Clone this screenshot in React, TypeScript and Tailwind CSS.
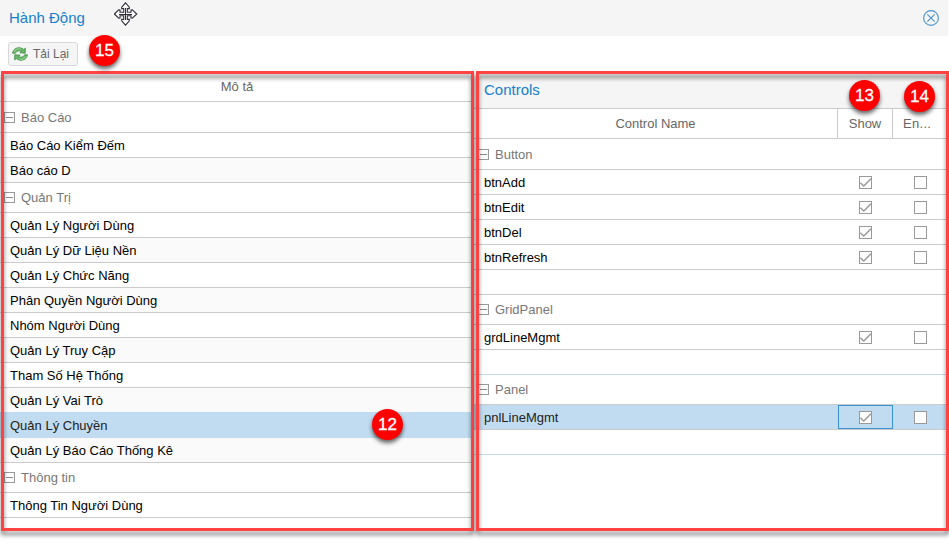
import React from "react";

type Row = { label: string; selected?: boolean };
type Group = { name: string; rows: Row[] };

const functionGroups: Group[] = [
  { name: "Báo Cáo", rows: [{ label: "Báo Cáo Kiểm Đếm" }, { label: "Báo cáo D" }] },
  {
    name: "Quản Trị",
    rows: [
      { label: "Quản Lý Người Dùng" },
      { label: "Quản Lý Dữ Liệu Nền" },
      { label: "Quản Lý Chức Năng" },
      { label: "Phân Quyền Người Dùng" },
      { label: "Nhóm Người Dùng" },
      { label: "Quản Lý Truy Cập" },
      { label: "Tham Số Hệ Thống" },
      { label: "Quản Lý Vai Trò" },
      { label: "Quản Lý Chuyền", selected: true },
      { label: "Quản Lý Báo Cáo Thống Kê" },
    ],
  },
  { name: "Thông tin", rows: [{ label: "Thông Tin Người Dùng" }] },
];

const controlGroups: (Group & { footer: string })[] = [
  {
    name: "Button",
    rows: [{ label: "btnAdd" }, { label: "btnEdit" }, { label: "btnDel" }, { label: "btnRefresh" }],
    footer: "border-[#cbcbcb]",
  },
  { name: "GridPanel", rows: [{ label: "grdLineMgmt" }], footer: "border-[#c1dcef]" },
  { name: "Panel", rows: [{ label: "pnlLineMgmt", selected: true }], footer: "border-[#c1dcef]" },
];

function CollapseIcon() {
  return (
    <svg width="11" height="11" viewBox="0 0 11 11" shapeRendering="crispEdges" className="shrink-0">
      <rect x="0.5" y="0.5" width="10" height="10" fill="#fff" stroke="#999" />
      <path d="M2 5.5h7" stroke="#888" />
    </svg>
  );
}

function Checkbox({ checked }: { checked?: boolean }) {
  return (
    <svg width="13" height="13" viewBox="0 0 13 13" className="shrink-0">
      <rect x="0.5" y="0.5" width="12" height="12" fill="#fff" stroke="#999" />
      {checked && <path d="M1.3 6.8 L4.8 10 L12 2.8" fill="none" stroke="#999" strokeWidth="1.5" />}
    </svg>
  );
}

function RefreshIcon() {
  return (
    <svg width="16" height="16" viewBox="0 0 16 16">
      <g fill="#69b865" stroke="#3c8a43" strokeWidth="0.8" strokeLinejoin="round">
        <path d="M0.6 7.2C1 3.4 4.2 1.4 8 1.8C9.6 2 10.8 2.6 11.7 3.4L13.4 2.2L13.2 7.2L7.8 6.8L9.4 5.4C7.2 4.2 4.4 4.8 3.3 7.3Z" />
        <path d="M15.4 8.8C15 12.6 11.8 14.6 8 14.2C6.4 14 5.2 13.4 4.3 12.6L2.6 13.8L2.8 8.8L8.2 9.2L6.6 10.6C8.8 11.8 11.6 11.2 12.7 8.7Z" />
      </g>
      <path d="M1.8 6C3 3.2 6 2.2 9 3M14.2 10C13 12.8 10 13.8 7 13" fill="none" stroke="#a9dba4" strokeWidth="0.8" />
    </svg>
  );
}

function MoveCursor() {
  return (
    <svg width="24" height="24" viewBox="0 0 24 24" className="absolute left-[114px] top-[2px]">
      <path
        d="M11.5 0.8L15.3 5.2V6.6H13.3V10.2H17V8L18.3 7.8L22.8 12L18.3 16.2L17 16V13.8H13.3V17.4H15.3V18.8L11.5 23.2L7.7 18.8V17.4H9.7V13.8H6V16L4.7 16.2L0.4 12L4.7 7.8L6 8V10.2H9.7V6.6H7.7V5.2Z"
        fill="#fff"
        stroke="#302f3b"
        strokeWidth="1.1"
      />
      <path d="M11.5 6V18M5 12H18" stroke="#302f3b" strokeWidth="1" shapeRendering="crispEdges" />
    </svg>
  );
}

function Badge({ n, place }: { n: number; place: string }) {
  return (
    <div
      className={`absolute flex h-[31px] w-[31px] items-center justify-center rounded-full bg-[#fe0000] text-[17px] leading-none text-white shadow-[0_3px_4px_rgba(0,0,0,0.6)] [-webkit-text-stroke:0.3px_white] ${place}`}
    >
      {n}
    </div>
  );
}

function FunctionList() {
  return (
    <section className="w-[474px] overflow-hidden">
      <div className="flex h-[30px] items-center justify-center border-b border-[#cbcbcb] text-[#666]">Mô tả</div>
      {functionGroups.map((g, gi) => (
        <div key={g.name}>
          <div
            className={`flex items-center gap-[6px] border-b border-[#cbcbcb] pl-1 text-[#777] ${gi === 0 ? "h-[31px]" : "h-[30px]"}`}
          >
            <CollapseIcon />
            {g.name}
          </div>
          {g.rows.map((r, i) => (
            <div
              key={r.label}
              className={
                r.selected
                  ? "relative -mt-px flex h-[26px] items-center bg-[#c1dcf1] pl-[10px] pt-px text-[#222]"
                  : `flex h-[25px] items-center border-b border-[#cbcbcb] pl-[10px] pt-px text-black ${i % 2 ? "bg-[#fafafa]" : "bg-white"}`
              }
            >
              {r.label}
            </div>
          ))}
        </div>
      ))}
    </section>
  );
}

function ControlList() {
  return (
    <section className="flex-1 overflow-hidden">
      <div className="flex h-[37px] items-center border-b border-[#cbcbcb] bg-[#f5f5f5] pb-[2px] pl-[10px] text-[15px] text-[#157fcc]">
        Controls
      </div>
      <div className="flex h-[30px] border-b border-[#cbcbcb] text-[#666]">
        <div className="flex w-[364px] items-center justify-center border-r border-[#cbcbcb]">Control Name</div>
        <div className="flex w-[55px] items-center justify-center border-r border-[#cbcbcb]">Show</div>
        <div className="flex w-[55px] items-center pl-[10px] tracking-[0.3px]">En...</div>
      </div>
      {controlGroups.map((g, gi) => (
        <div key={g.name}>
          <div
            className={`flex items-center gap-[6px] border-b border-[#cbcbcb] pl-1 text-[#777] ${gi === 0 ? "h-[31px]" : "h-[30px]"}`}
          >
            <CollapseIcon />
            {g.name}
          </div>
          {g.rows.map((r) => (
            <div
              key={r.label}
              className={`flex h-[25px] border-b border-[#cbcbcb] ${r.selected ? "bg-[#c1dcf1] text-[#222]" : "bg-white text-black"}`}
            >
              <div className="flex w-[364px] items-center pl-[10px] pt-px">{r.label}</div>
              <div
                className={`flex w-[55px] items-center justify-center border pt-px ${r.selected ? "border-[#3892d4]" : "border-transparent"}`}
              >
                <Checkbox checked />
              </div>
              <div className="flex w-[55px] items-center justify-center pt-px">
                <Checkbox />
              </div>
            </div>
          ))}
          <div className={`h-[25px] border-b ${g.footer}`} />
        </div>
      ))}
    </section>
  );
}

export default function App() {
  const frame =
    "pointer-events-none absolute top-[71px] h-[460px] w-[473px] border-[3px] border-[#ff4343] [filter:drop-shadow(0_4px_2px_rgba(0,0,0,0.5))]";
  return (
    <div className="relative flex h-[546px] w-[949px] flex-col overflow-hidden bg-white font-['Liberation_Sans',Arial,sans-serif] text-[13px] leading-[17px]">
      <header className="flex h-9 shrink-0 items-center justify-between border-r border-white bg-[#f5f5f5] pl-[9px] pr-2">
        <h1 className="pb-[2px] text-[15px] text-[#157fcc]">Hành Động</h1>
        <svg width="18" height="18" viewBox="0 0 18 18" fill="none" stroke="#4a94cb" strokeWidth="1.1">
          <circle cx="9" cy="9" r="7.4" />
          <path d="M5.3 5.3l7.4 7.4M12.7 5.3l-7.4 7.4" />
        </svg>
      </header>
      <div className="flex h-9 shrink-0 items-center pl-2">
        <button className="flex h-6 w-[70px] items-center gap-[5px] rounded-[3px] border border-[#d8d8d8] bg-[#f5f5f5] pl-[3px] text-[12px] text-[#666]">
          <RefreshIcon />
          Tải Lại
        </button>
      </div>
      <main className="flex flex-1">
        <FunctionList />
        <ControlList />
      </main>
      <MoveCursor />
      <div className={`${frame} left-px`} />
      <div className={`${frame} left-[476px]`} />
      <Badge n={15} place="left-[89px] top-[35px]" />
      <Badge n={13} place="left-[849px] top-[80px]" />
      <Badge n={14} place="left-[904px] top-[81px]" />
      <Badge n={12} place="left-[372px] top-[409px]" />
    </div>
  );
}
